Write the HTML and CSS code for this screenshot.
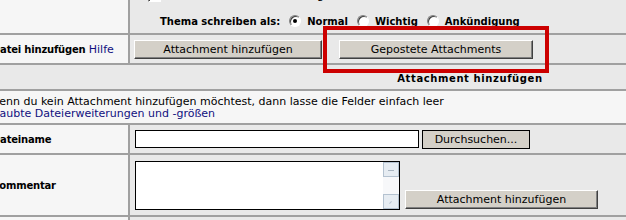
FILE: index.html
```html
<!DOCTYPE html>
<html>
<head>
  <title>Neues Thema schreiben</title>
  <link rel="stylesheet" href="styles.css">
</head>
<body>

<div class="form">
  <div class="cell label"></div>
  <div class="cell field options">
    <div class="opt-line first"><span class="check"></span> Bei Antworten benachrichtigen</div>
    <div class="opt-line topic">
      Thema schreiben als:
      <span class="radio on"></span> Normal
      <span class="radio"></span> Wichtig
      <span class="radio"></span> Ankündigung
    </div>
  </div>

  <div class="cell label">Datei hinzufügen&nbsp;<a href="#" class="help">Hilfe</a></div>
  <div class="cell field">
    <button class="btn add-top">Attachment hinzufügen</button>
    <span class="marked"><button class="btn posted">Gepostete Attachments</button></span>
  </div>

  <div class="cell head">Attachment hinzufügen</div>

  <div class="cell wide">
    Wenn du kein Attachment hinzufügen möchtest, dann lasse die Felder einfach leer<br>
    <a href="#" class="ext-link">Erlaubte Dateierweiterungen und -größen</a>
  </div>

  <div class="cell label">Dateiname</div>
  <div class="cell field">
    <input type="text" class="file-input">
    <button class="btn browse">Durchsuchen...</button>
  </div>

  <div class="cell label">Kommentar</div>
  <div class="cell field comment">
    <div class="textarea">
      <div class="text"></div>
      <div class="scroll">
        <span class="sb-btn up"></span>
        <span class="sb-btn down"></span>
      </div>
    </div>
    <button class="btn add-bottom">Attachment hinzufügen</button>
  </div>

  <div class="cell label last"></div>
  <div class="cell field last"></div>
</div>

</body>
</html>
```

FILE: styles.css
```css
body {
  margin: 0;
  background-color: #e9e9e9;
  font-family: "DejaVu Sans", Verdana, sans-serif;
  font-size: 11px;
  color: #000;
  overflow: hidden;
}

a {
  color: #10107f;
  text-decoration: none;
  font-weight: normal;
  font-size: 11px;
  letter-spacing: 0;
}

.form {
  display: grid;
  grid-template-columns: 142px 1fr;
  width: 964px;
  margin: -14px 0 0 -12px;
}

.cell {
  border-bottom: 2px solid #a0a0a0;
  box-sizing: border-box;
}

.label {
  background-color: #f6f6f6;
  border-right: 2px solid #a0a0a0;
  font-weight: bold;
  font-size: 10px;
  letter-spacing: -0.2px;
  display: flex;
  align-items: center;
  padding-left: 4px;
}

.field {
  display: flex;
  align-items: center;
  padding-left: 4px;
  height: 30px;
}

.options {
  height: 49px;
  flex-direction: column;
  align-items: flex-start;
}

.opt-line {
  display: flex;
  align-items: center;
  box-sizing: border-box;
}

.opt-line.first {
  height: 18px;
  padding-left: 14px;
}

.opt-line.topic {
  height: 28px;
  padding: 6px 0 0 26px;
  font-weight: bold;
  font-size: 10px;
}

.check {
  width: 11px;
  height: 11px;
  background: #fff;
  border: 1px solid;
  border-color: #808080 #fff #fff #808080;
  box-shadow: inset 1px 1px #404040;
  margin-right: 6px;
}

.radio {
  width: 10px;
  height: 10px;
  border-radius: 50%;
  background: #fff;
  border: 1px solid;
  border-color: #808080 #fff #fff #808080;
  box-shadow: inset 1px 1px #404040;
  margin: 0 6px 0 9px;
  position: relative;
}

.radio.on::after {
  content: "";
  position: absolute;
  left: 3px;
  top: 3px;
  width: 4px;
  height: 4px;
  border-radius: 50%;
  background: #000;
}

.btn {
  font-family: "DejaVu Sans", Verdana, sans-serif;
  font-size: 11px;
  height: 19px;
  padding: 0;
  background-color: #d4d0c8;
  border: 1px solid;
  border-color: #fff #404040 #404040 #fff;
  box-shadow: inset -1px -1px #808080;
  color: #000;
}

.add-top {
  width: 188px;
}

.marked {
  position: relative;
  margin-left: 17px;
}

.marked::after {
  content: "";
  position: absolute;
  left: -16px;
  right: -16px;
  top: -14px;
  bottom: -14px;
  border: 4px solid #cc0000;
}

.posted {
  width: 194px;
}

.head {
  grid-column: 1 / -1;
  height: 26px;
  padding-top: 8px;
  text-align: center;
  font-weight: bold;
  font-size: 10px;
  letter-spacing: 0.6px;
  line-height: 12px;
}

.wide {
  grid-column: 1 / -1;
  background-color: #f6f6f6;
  height: 34px;
  padding: 5px 0 0 1px;
  line-height: 12px;
}

.ext-link {
  display: inline-block;
  margin-left: -4px;
}

.file-input {
  width: 284px;
  height: 18px;
  box-sizing: border-box;
  margin: 0 3px 0 1px;
  border: 1px solid #000;
  background: #fff;
  padding: 0;
}

.browse {
  width: 108px;
  border: 1px solid #000;
  box-shadow: none;
}

.comment {
  height: 62px;
  align-items: flex-end;
  padding-bottom: 5px;
}

.textarea {
  width: 265px;
  height: 49px;
  box-sizing: border-box;
  margin-left: 1px;
  border: 1px solid #000;
  background: #fff;
  display: flex;
}

.textarea .text {
  flex: 1;
}

.scroll {
  width: 16px;
  display: flex;
  flex-direction: column;
  justify-content: space-between;
  background: #f7f8fa;
}

.sb-btn {
  height: 15px;
  box-sizing: border-box;
  border: 1px solid #b4c2d0;
  background: #e6ecf2;
  position: relative;
}

.sb-btn.up::after {
  content: "";
  position: absolute;
  left: 4px;
  top: 7px;
  width: 6px;
  height: 1px;
  background: #a8b4c0;
}

.sb-btn.down::after {
  content: "";
  position: absolute;
  left: 6px;
  top: 6px;
  width: 1px;
  height: 3px;
  background: #b8c4d0;
  transform: rotate(45deg);
}

.add-bottom {
  width: 193px;
  margin: 0 0 1px 5px;
}

.last {
  height: 20px;
}
```
